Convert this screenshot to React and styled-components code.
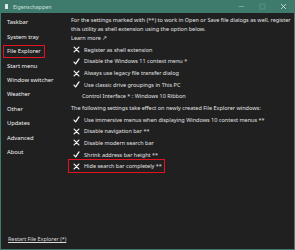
import React from 'react';
import styled, { createGlobalStyle } from 'styled-components';

const menu = [
  'Taskbar',
  'System tray',
  'File Explorer',
  'Start menu',
  'Window switcher',
  'Weather',
  'Other',
  'Updates',
  'Advanced',
  'About',
];

const topOptions = [
  { on: false, label: 'Register as shell extension' },
  { on: true, label: 'Disable the Windows 11 context menu *' },
  { on: false, label: 'Always use legacy file transfer dialog' },
  { on: true, label: 'Use classic drive groupings in This PC' },
];

const bottomOptions = [
  { on: true, label: 'Use immersive menus when displaying Windows 10 context menus **' },
  { on: false, label: 'Disable navigation bar **' },
  { on: false, label: 'Disable modern search bar' },
  { on: true, label: 'Shrink address bar height **' },
  { on: false, label: 'Hide search bar completely **', selected: true },
];

function Mark({ on }) {
  return (
    <MarkBox>
      {on ? (
        <svg width="7" height="7" viewBox="0 0 10 10">
          <path d="M1.5 5.8 L3.8 8.4 L8.6 1.4" fill="none" stroke="#f4f4f4" strokeWidth="1.8" strokeLinecap="round" strokeLinejoin="round" />
        </svg>
      ) : (
        <svg width="7" height="7" viewBox="0 0 10 10">
          <path d="M1.6 1.6 L8.4 8.4 M8.4 1.6 L1.6 8.4" fill="none" stroke="#f4f4f4" strokeWidth="1.8" strokeLinecap="round" />
        </svg>
      )}
    </MarkBox>
  );
}

function Option({ on, label, selected }) {
  return (
    <Row>
      <OptionInner selected={selected}>
        <Mark on={on} />
        <span>{label}</span>
      </OptionInner>
    </Row>
  );
}

export default function App() {
  return (
    <>
      <Global />
      <Window>
        <TitleBar>
          <AppIcon />
          <Title>Eigenschappen</Title>
          <Controls>
            <Ctrl>
              <svg width="7" height="7" viewBox="0 0 10 10">
                <path d="M1 5 H9" stroke="#8fb8ae" strokeWidth="1" />
              </svg>
            </Ctrl>
            <Ctrl>
              <svg width="7" height="7" viewBox="0 0 10 10">
                <rect x="1.5" y="1.5" width="7" height="7" fill="none" stroke="#5f9a8c" strokeWidth="1" />
              </svg>
            </Ctrl>
            <Ctrl>
              <svg width="7" height="7" viewBox="0 0 10 10">
                <path d="M1.5 1.5 L8.5 8.5 M8.5 1.5 L1.5 8.5" stroke="#d8e8e4" strokeWidth="1.2" />
              </svg>
            </Ctrl>
          </Controls>
        </TitleBar>
        <Body>
          <Sidebar>
            <MenuList>
              {menu.map((item) => (
                <MenuItem key={item}>
                  <MenuLabel active={item === 'File Explorer'}>{item}</MenuLabel>
                </MenuItem>
              ))}
            </MenuList>
            <RestartLink>Restart File Explorer (*)</RestartLink>
          </Sidebar>
          <Content>
            <Para>
              For the settings marked with (**) to work in Open or Save file dialogs as well, register
              this utility as shell extension using the option below.
            </Para>
            <LearnMore>Learn more ↗</LearnMore>
            <Options>
              {topOptions.map((o) => (
                <Option key={o.label} {...o} />
              ))}
              <Row>
                <Indented>Control Interface * : Windows 10 Ribbon</Indented>
              </Row>
              <Row>The following settings take effect on newly created File Explorer windows:</Row>
              {bottomOptions.map((o) => (
                <Option key={o.label} {...o} />
              ))}
            </Options>
          </Content>
        </Body>
      </Window>
    </>
  );
}

const Global = createGlobalStyle`
  html, body {
    margin: 0;
    padding: 0;
    background: #202020;
  }
  body {
    font-family: 'Noto Sans', 'Open Sans', sans-serif;
    -webkit-font-smoothing: antialiased;
  }
`;

const Window = styled.div`
  width: 295px;
  height: 250px;
  box-sizing: border-box;
  display: flex;
  flex-direction: column;
  background: #202020;
  border: 1px solid #3e7b6d;
  border-top: none;
  color: #e6e6e6;
  overflow: hidden;
`;

const TitleBar = styled.div`
  height: 13px;
  flex: none;
  display: flex;
  align-items: center;
  background: #3e7b6d;
  padding-left: 4px;
`;

const AppIcon = styled.div`
  width: 3px;
  height: 5px;
  background: #dfe9e6;
  border-radius: 0.5px;
  margin-right: 5px;
`;

const Title = styled.div`
  font-size: 5.4px;
  color: #cfe0dc;
`;

const Controls = styled.div`
  margin-left: auto;
  display: flex;
  height: 100%;
`;

const Ctrl = styled.div`
  width: 21px;
  height: 100%;
  display: flex;
  align-items: center;
  justify-content: center;
`;

const Body = styled.div`
  flex: 1;
  display: flex;
  min-height: 0;
`;

const Sidebar = styled.div`
  width: 70px;
  flex: none;
  display: flex;
  flex-direction: column;
  justify-content: space-between;
  padding: 2px 0 6px 3px;
  box-sizing: border-box;
`;

const MenuList = styled.div`
  display: flex;
  flex-direction: column;
`;

const MenuItem = styled.div`
  height: 14.45px;
  display: flex;
  align-items: center;
`;

const MenuLabel = styled.span`
  font-size: 5.8px;
  color: #f3f3f3;
  padding: 1.5px 3px;
  outline: ${(p) => (p.active ? '1.3px solid #e3121e' : 'none')};
`;

const RestartLink = styled.span`
  font-size: 5.4px;
  color: #d8d8d8;
  text-decoration: underline;
  padding-left: 4px;
`;

const Content = styled.div`
  flex: 1;
  padding-top: 3px;
  font-size: 5.5px;
  color: #e3e3e3;
`;

const Para = styled.div`
  line-height: 9px;
`;

const LearnMore = styled.div`
  line-height: 9px;
`;

const Options = styled.div`
  margin-top: 1px;
  display: flex;
  flex-direction: column;
`;

const Row = styled.div`
  height: 11.65px;
  display: flex;
  align-items: center;
  white-space: nowrap;
`;

const OptionInner = styled.div`
  display: flex;
  align-items: center;
  margin-left: -2px;
  padding: 2px;
  outline: ${(p) => (p.selected ? '1.3px solid #e3121e' : 'none')};
`;

const MarkBox = styled.span`
  width: 11px;
  display: flex;
  justify-content: center;
  margin-right: 2px;
`;

const Indented = styled.span`
  padding-left: 11px;
`;
